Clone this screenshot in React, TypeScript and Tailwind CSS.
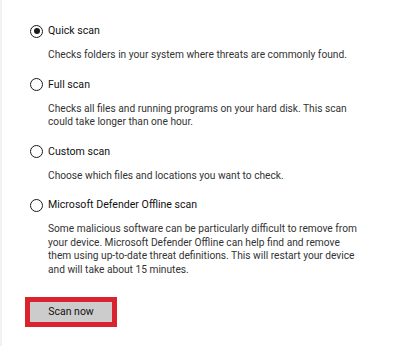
import React from 'react';

interface ScanOption {
  label: string;
  lines: string[];
  selected?: boolean;
}

const options: ScanOption[] = [
  {
    label: 'Quick scan',
    lines: ['Checks folders in your system where threats are commonly found.'],
    selected: true,
  },
  {
    label: 'Full scan',
    lines: [
      'Checks all files and running programs on your hard disk. This scan',
      'could take longer than one hour.',
    ],
  },
  {
    label: 'Custom scan',
    lines: ['Choose which files and locations you want to check.'],
  },
  {
    label: 'Microsoft Defender Offline scan',
    lines: [
      'Some malicious software can be particularly difficult to remove from',
      'your device. Microsoft Defender Offline can help find and remove',
      'them using up-to-date threat definitions. This will restart your device',
      'and will take about 15 minutes.',
    ],
  },
];

const Radio: React.FC<{ checked?: boolean }> = ({ checked }) => (
  <span className="flex h-[13px] w-[13px] shrink-0 items-center justify-center rounded-full border-[1.5px] border-[#1a1a1a] bg-white">
    {checked && <span className="h-[6px] w-[6px] rounded-full bg-[#1a1a1a]" />}
  </span>
);

const Option: React.FC<{ option: ScanOption; first?: boolean }> = ({ option, first }) => (
  <div className={first ? '' : 'mt-[15px]'}>
    <div className="flex h-[16px] items-center gap-[5px]">
      <Radio checked={option.selected} />
      <span className="text-[10.6px] leading-[16px] text-[#111111]">{option.label}</span>
    </div>
    {/* Description */}
    <div className="ml-[18px] mt-[9px] text-[10.2px] leading-[13.5px] text-[#333333]">
      {option.lines.map((line) => (
        <div key={line} className="whitespace-nowrap">
          {line}
        </div>
      ))}
    </div>
  </div>
);

export default function App() {
  return (
    <div
      className="h-[346px] w-[400px] overflow-hidden border-l-2 border-[#f2f2f2] bg-white"
      style={{ fontFamily: 'Roboto, "Noto Sans", sans-serif' }}
    >
      <div className="pl-[28px] pt-[23px]">
        {options.map((option, i) => (
          <Option key={option.label} option={option} first={i === 0} />
        ))}

        <div className="-ml-[5px] mt-[21px] w-[92px] border-[5px] border-[#d9232e]">
          <button className="flex h-[20px] w-full items-center justify-center bg-[#cccccc] text-[10.5px] text-[#111111]">
            Scan now
          </button>
        </div>
      </div>
    </div>
  );
}
